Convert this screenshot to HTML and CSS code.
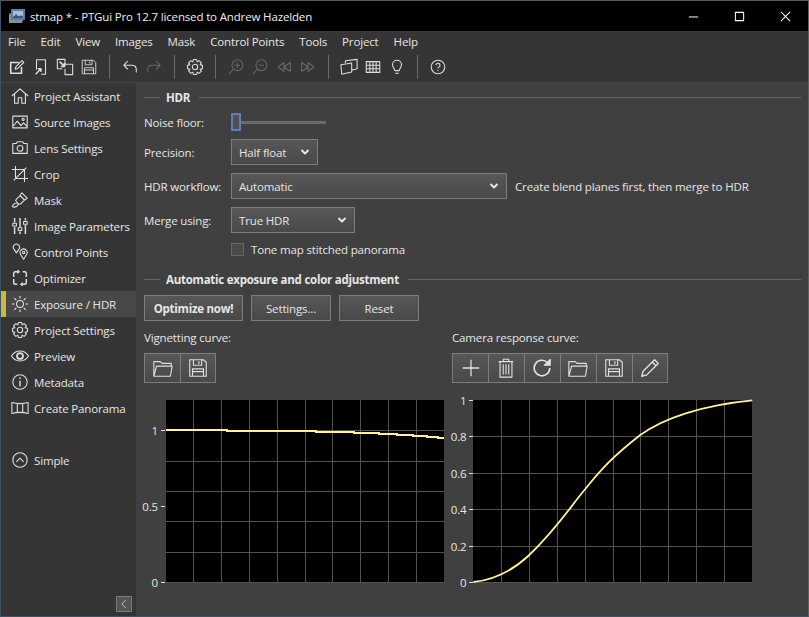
FILE: index.html
```html
<!DOCTYPE html>
<html lang="en">
<head>
  <meta charset="UTF-8" />
  <title>stmap * - PTGui Pro 12.7</title>
  <link rel="stylesheet" href="styles.css">
</head>
<body>
  <!-- Shared icons -->
  <svg class="sprites" width="0" height="0">
    <symbol id="i-folder" viewBox="0 0 24 24"><path d="M2 21V5h7l2 2h10v3M2 21h18l2-11H5z"/></symbol>
    <symbol id="i-save" viewBox="0 0 24 24"><path d="M3 3h15l3 3v15H3zM7 3v6h9V3M13 4.500v3M6 21v-8h12v8M6 16h12"/></symbol>
    <symbol id="i-gear" viewBox="0 0 20 20"><path d="M18.300 8.200L18.300 11.800L15.700 12.400L17.100 14.600L14.600 17.100L12.400 15.700L11.800 18.300L8.200 18.300L7.600 15.700L5.400 17.100L2.900 14.600L4.300 12.400L1.700 11.800L1.700 8.200L4.300 7.600L2.900 5.400L5.400 2.900L7.600 4.300L8.200 1.700L11.800 1.700L12.400 4.300L14.600 2.900L17.100 5.400L15.700 7.600Z"/><circle cx="10" cy="10" r="3"/></symbol>
    <symbol id="i-chevron" viewBox="0 0 10 8"><path d="M1.500 2l3.500 3.500L8.500 2"/></symbol>
  </svg>

  <div class="window">
    <!-- Title bar -->
    <header class="titlebar">
      <svg class="app-icon" viewBox="0 0 16 16"><rect x="2" y="1" width="14" height="11" fill="#5c7ea8"/><rect x="4" y="3" width="10" height="5" fill="#a9bdd6"/><path d="M0 15V6l2-1v7h12l-1 3z" fill="#8d8d8d"/><path d="M4 10l3-4 3 3 2-2 2 3z" fill="#39526f"/></svg>
      <span class="title-text">stmap * - PTGui Pro 12.7 licensed to Andrew Hazelden</span>
      <div class="win-buttons">
        <svg viewBox="0 0 12 12"><path d="M1 6.500h10"/></svg>
        <svg viewBox="0 0 12 12"><rect x="1.500" y="1.500" width="9" height="9"/></svg>
        <svg viewBox="0 0 12 12"><path d="M1 1l10 10M11 1L1 11"/></svg>
      </div>
    </header>

    <!-- Menu -->
    <nav class="menubar">
      <span>File</span><span>Edit</span><span>View</span><span>Images</span><span>Mask</span><span>Control Points</span><span>Tools</span><span>Project</span><span>Help</span>
    </nav>

    <!-- Toolbar -->
    <div class="toolbar">
      <button class="tool"><svg viewBox="0 0 20 20"><path d="M12 5H3v12h12V10" stroke-width="1.800"/><path d="M8 12.500l.8-3L15.500 3l2 2-6.700 6.600z"/></svg></button>
      <button class="tool"><svg viewBox="0 0 20 20"><path d="M5 13V2h10v16h-5"/><path d="M4 18l6-6M6.500 12H10v3.500" stroke-width="1.600"/></svg></button>
      <button class="tool"><svg viewBox="0 0 20 20"><path d="M7 12H1.500V1.500H10V8M7 7h11.500v11.500H10V12"/><path d="M4 4l5.500 5.500M9.500 5.500v4h-4" stroke-width="1.800"/></svg></button>
      <button class="tool"><svg viewBox="0 0 24 24"><use href="#i-save"/></svg></button>
      <i class="sep"></i>
      <button class="tool"><svg viewBox="0 0 20 20"><path d="M3 8l4.500-4.500M3 8l4.500 4.500M3 8h9c3 0 5 2 5 5v3"/></svg></button>
      <button class="tool dim"><svg viewBox="0 0 20 20"><path d="M17 8l-4.500-4.500M17 8l-4.500 4.500M17 8H8c-3 0-5 2-5 5v3"/></svg></button>
      <i class="sep"></i>
      <button class="tool"><svg viewBox="0 0 20 20"><use href="#i-gear"/></svg></button>
      <i class="sep"></i>
      <button class="tool dim"><svg viewBox="0 0 20 20"><circle cx="11.500" cy="8" r="6"/><path d="M7 12.500L2 18M11.500 5v6M8.500 8h6"/></svg></button>
      <button class="tool dim"><svg viewBox="0 0 20 20"><circle cx="11.500" cy="8" r="6"/><path d="M7 12.500L2 18M8.500 8h6"/></svg></button>
      <button class="tool dim"><svg viewBox="0 0 20 20"><path d="M10 5L3.500 10l6.500 5zM17 5l-7 5 7 5z"/></svg></button>
      <button class="tool dim"><svg viewBox="0 0 20 20"><path d="M10 5l6.500 5-6.500 5zM3 5l7 5-7 5z"/></svg></button>
      <i class="sep"></i>
      <button class="tool"><svg viewBox="0 0 20 20"><path d="M1 7.500l12-2v10l-11 2.500zM6 5.500V3l13-1.500V12l-6 1.500"/></svg></button>
      <button class="tool"><svg viewBox="0 0 20 20"><path d="M2.500 4h15v12h-15zM2.500 8h15M2.500 12h15M6.500 4v12M10 4v12M13.500 4v12"/></svg></button>
      <button class="tool"><svg viewBox="0 0 20 20"><path d="M7.500 14c0-2-2.500-3.500-2.500-6.500a5 5 0 0 1 10 0c0 3-2.500 4.500-2.500 6.500zM8 17h4"/></svg></button>
      <i class="sep"></i>
      <button class="tool"><svg viewBox="0 0 20 20"><circle cx="10" cy="10" r="7.500"/><path d="M7.800 8a2.200 2.200 0 1 1 3.400 1.900c-.9.600-1.200 1-1.200 1.900M10 13.200v1.300"/></svg></button>
    </div>

    <div class="main">
      <!-- Side navigation -->
      <aside class="sidebar">
        <a class="nav-item"><svg viewBox="0 0 20 20"><path d="M1 10l9-8 9 8M4 8v10h4v-6h4v6h4V8"/></svg>Project Assistant</a>
        <a class="nav-item"><svg viewBox="0 0 20 20"><path d="M2 3.500h16v13H2zM2 15l5-6 4 5 3-3 4 4"/><circle cx="13.500" cy="7" r="1.200"/></svg>Source Images</a>
        <a class="nav-item"><svg viewBox="0 0 20 20"><path d="M2 5h4l1-2h6l1 2h4v11H2z"/><circle cx="10" cy="10.500" r="3.200"/></svg>Lens Settings</a>
        <a class="nav-item"><svg viewBox="0 0 20 20"><path d="M5 1v14h14M1 5h14v14M3 17L17 3"/></svg>Crop</a>
        <a class="nav-item"><svg viewBox="0 0 20 20"><path d="M12 2l6 6-3 2-5-5zM10 5.500L6 9c-1 1-1 2 0 3l2 2c1 1 2 1 3 0l4-4M7.500 13L4 14c-1 .5-2 2-2.500 3.500C3 18 5 18 6.500 17c1-.8 1.500-2 1.500-3"/></svg>Mask</a>
        <a class="nav-item"><svg viewBox="0 0 20 20"><path d="M4 1v5M4 11v8M10 1v10M10 16v3M16 1v3M16 9v10" stroke-width="1.600"/><path d="M2 7h4v3H2zM8 12h4v3H8zM14 5h4v3h-4z"/></svg>Image Parameters</a>
        <a class="nav-item"><svg viewBox="0 0 20 20"><path d="M6 11L3 6.500a3.500 3.500 0 1 1 6 0zM14 18l-3.500-5.500a4 4 0 1 1 7 0z"/><circle cx="14" cy="10.500" r="1.300"/></svg>Control Points</a>
        <a class="nav-item"><svg viewBox="0 0 20 20"><path d="M3 9V5c0-1 1-2 2-2h2M7 1.500L9 3 7 4.500M13 3h2c1 0 2 1 2 2v4M17 11v4c0 1-1 2-2 2h-2M13 18.500L11 17l2-1.500M7 17H5c-1 0-2-1-2-2v-4" stroke-width="1.600"/></svg>Optimizer</a>
        <a class="nav-item active"><svg viewBox="0 0 20 20"><circle cx="10" cy="10" r="3.800"/><path d="M10 1v3M10 16v3M1 10h3M16 10h3M3.600 3.600l2.200 2.200M14.200 14.200l2.200 2.200M3.600 16.400l2.200-2.200M14.200 5.800l2.200-2.200"/></svg>Exposure / HDR</a>
        <a class="nav-item"><svg viewBox="0 0 20 20"><use href="#i-gear"/></svg>Project Settings</a>
        <a class="nav-item"><svg viewBox="0 0 20 20"><path d="M.5 10C3 6 6 4.500 10 4.500S17 6 19.500 10C17 14 14 15.500 10 15.500S3 14 .5 10z"/><circle cx="10" cy="10" r="3.300" stroke-width="2"/></svg>Preview</a>
        <a class="nav-item"><svg viewBox="0 0 20 20"><circle cx="10" cy="10" r="8"/><path d="M10 8.500V15M10 5v1.800" stroke-width="1.600"/></svg>Metadata</a>
        <a class="nav-item"><svg viewBox="0 0 20 20"><path d="M1 4c6 1.500 12 1.500 18 0v12c-6-1.500-12-1.500-18 0zM7 5v10M13 5v10"/></svg>Create Panorama</a>
        <a class="nav-item simple"><svg viewBox="0 0 20 20"><circle cx="10" cy="10" r="8"/><path d="M6 12l4-4 4 4"/></svg>Simple</a>
        <button class="collapse"><svg viewBox="0 0 16 16"><path d="M10.500 2.500L5 8l5.500 5.500"/></svg></button>
      </aside>

      <!-- HDR panel -->
      <section class="content">
        <div class="group-title first"><span>HDR</span></div>

        <div class="form">
          <label>Noise floor:</label>
          <div class="slider"><i class="handle"></i><i class="track"></i></div>
          <label>Precision:</label>
          <div><div class="combo w-precision">Half float<svg viewBox="0 0 10 8"><use href="#i-chevron"/></svg></div></div>
          <label>HDR workflow:</label>
          <div class="with-note"><div class="combo w-workflow">Automatic<svg viewBox="0 0 10 8"><use href="#i-chevron"/></svg></div><span>Create blend planes first, then merge to HDR</span></div>
          <label>Merge using:</label>
          <div><div class="combo w-merge">True HDR<svg viewBox="0 0 10 8"><use href="#i-chevron"/></svg></div></div>
          <i></i>
          <div class="check"><i class="box"></i>Tone map stitched panorama</div>
        </div>

        <div class="group-title second"><span>Automatic exposure and color adjustment</span></div>

        <div class="actions">
          <button class="btn strong">Optimize now!</button>
          <button class="btn">Settings...</button>
          <button class="btn">Reset</button>
        </div>

        <div class="curves">
          <div class="curve">
            <div class="curve-label">Vignetting curve:</div>
            <div class="tool-group">
              <button><svg viewBox="0 0 24 24"><use href="#i-folder"/></svg></button>
              <button><svg viewBox="0 0 24 24"><use href="#i-save"/></svg></button>
            </div>
            <svg class="plot" width="300" height="183" viewBox="0 0 300 183">
              <rect class="plot-bg" x="22" y="0" width="278" height="182"/>
              <path class="grid" d="M49.500 0v182M77.500 0v182M105.500 0v182M133.500 0v182M161.500 0v182M188.500 0v182M216.500 0v182M244.500 0v182M272.500 0v182M22 30.500h278M22 61.500h278M22 91.500h278M22 121.500h278M22 152.500h278M22 182.500h278"/>
              <path class="ticks" d="M17 30.500h4M17 106.500h4M17 182.500h4"/>
              <text x="14" y="34.500">1</text>
              <text x="14" y="110.500">0.5</text>
              <text x="14" y="186.500">0</text>
              <path class="line steps" d="M22 30H83V31H172V32H210V33H235V34H253V35H269V36H283V37H294V38H300"/>
            </svg>
          </div>

          <div class="curve">
            <div class="curve-label">Camera response curve:</div>
            <div class="tool-group">
              <button><svg viewBox="0 0 24 24"><path d="M12 3v18M3 12h18" stroke-width="1.400"/></svg></button>
              <button><svg viewBox="0 0 24 24"><path d="M4 5h16M9 5V2.500h6V5M5.500 5v17h13V5M9 8v11M12 8v11M15 8v11"/></svg></button>
              <button><svg viewBox="0 0 24 24"><path d="M20.500 12a8.500 8.500 0 1 1-2.500-6l2.500 2.500" stroke-width="1.800"/><path d="M21 2.500v6.500h-6.500z" fill="#ddd"/></svg></button>
              <button><svg viewBox="0 0 24 24"><use href="#i-folder"/></svg></button>
              <button><svg viewBox="0 0 24 24"><use href="#i-save"/></svg></button>
              <button><svg viewBox="0 0 24 24"><path d="M3 21l1.500-5.500L17 3l4 4L8.500 19.500zM14.500 5.500l4 4" stroke-width="1.500"/></svg></button>
            </div>
            <svg class="plot" width="300" height="183" viewBox="0 0 300 183">
              <rect class="plot-bg" x="21" y="0" width="279" height="182"/>
              <path class="grid" d="M49.500 0v182M77.500 0v182M105.500 0v182M133.500 0v182M161.500 0v182M188.500 0v182M216.500 0v182M244.500 0v182M272.500 0v182M21 36.500h279M21 73.500h279M21 109.500h279M21 146.500h279M21 182.500h279"/>
              <path class="ticks" d="M17 .5h4M17 36.500h4M17 73.500h4M17 109.500h4M17 146.500h4M17 182.500h4"/>
              <text x="14.500" y="4.500">1</text>
              <text x="14.500" y="40.500">0.8</text>
              <text x="14.500" y="77.500">0.6</text>
              <text x="14.500" y="113.500">0.4</text>
              <text x="14.500" y="150.500">0.2</text>
              <text x="14.500" y="186.500">0</text>
              <path class="line" transform="translate(21.300 0)" d="M0 182C20 180 40 170 56 155C84 128 96 108 112 89C128 69 140 56 167 35C190 18 230 5 279 .3"/>
            </svg>
          </div>
        </div>
      </section>
    </div>
  </div>
</body>
</html>
```

FILE: styles.css
```css
* {
  box-sizing: border-box;
}
html, body {
  margin: 0;
  height: 100%;
}
body {
  background: #404040;
  color: #e6e6e6;
  font-family: 'Open Sans', sans-serif;
  font-size: 11.5px;
  letter-spacing: -0.15px;
  overflow: hidden;
}
.sprites {
  position: absolute;
}
svg {
  fill: none;
  stroke: currentColor;
  stroke-width: 1.2;
  stroke-linejoin: round;
}
button {
  font: inherit;
  color: inherit;
  letter-spacing: inherit;
}
.window {
  display: flex;
  flex-direction: column;
  width: 809px;
  height: 617px;
  border-style: solid;
  border-width: 1px 1px 1px 1px;
  border-color: #5a5a5a #5f6164 #3d5268 #3d5268;
}

/* Title bar */
.titlebar {
  display: flex;
  align-items: center;
  flex: 0 0 30px;
  background: #000;
  color: #eee;
  padding-left: 8px;
}
.app-icon {
  width: 16px;
  height: 16px;
  margin-right: 5px;
  stroke: none;
}
.title-text {
  flex: 1;
}
.win-buttons {
  display: flex;
  align-items: center;
  margin-right: 17px;
  gap: 35px;
}
.win-buttons svg {
  width: 11px;
  height: 11px;
  color: #fff;
  stroke-width: 1.100;
}

/* Menu */
.menubar {
  display: flex;
  align-items: center;
  flex: 0 0 21px;
  background: #353535;
  padding-left: 7px;
  gap: 15px;
}

/* Toolbar */
.toolbar {
  display: flex;
  align-items: center;
  flex: 0 0 31px;
  background: #353535;
  border-bottom: 1px solid #444;
  padding-left: 4px;
}
.tool {
  width: 24px;
  height: 24px;
  padding: 3px;
  background: none;
  border: 0;
  color: #dcdcdc;
}
.tool svg {
  display: block;
  width: 18px;
  height: 18px;
}
.tool.dim {
  color: #666;
}
.sep {
  width: 1px;
  height: 24px;
  margin: 0 8px;
  background: #6a6a6a;
}

/* Sidebar */
.main {
  display: flex;
  flex: 1;
  min-height: 0;
}
.sidebar {
  position: relative;
  display: flex;
  flex-direction: column;
  flex: 0 0 135px;
  background: #353535;
}
.nav-item {
  display: flex;
  align-items: center;
  flex: 0 0 26px;
  padding-left: 10px;
  gap: 5px;
  color: #e6e6e6;
}
.nav-item svg {
  width: 18px;
  height: 18px;
  color: #e0e0e0;
}
.nav-item.active {
  background: #484848;
  border-left: 5px solid #c9b93a;
  padding-left: 5px;
}
.nav-item.simple {
  margin-top: 26px;
}
.collapse {
  position: absolute;
  right: 4px;
  bottom: 4px;
  width: 16px;
  height: 16px;
  padding: 1px;
  background: #555;
  border: 1px solid #7a7a7a;
  color: #ccc;
}
.collapse svg {
  display: block;
}

/* Panel */
.content {
  flex: 1;
  display: flex;
  flex-direction: column;
  padding: 6px 7px 0 8px;
  background: #404040;
}
.group-title {
  display: flex;
  align-items: center;
  height: 16px;
  gap: 6px;
  font-weight: 700;
  letter-spacing: -0.25px;
}
.group-title.second {
  margin-top: 15px;
}
.group-title::before {
  content: "";
  width: 16px;
  height: 1px;
  background: #666;
}
.group-title::after {
  content: "";
  flex: 1;
  height: 1px;
  margin-left: 3px;
  background: #666;
}
.form {
  display: grid;
  grid-template-columns: 87px 1fr;
  align-items: center;
  row-gap: 8px;
  margin-top: 8px;
}
.slider {
  display: flex;
  align-items: center;
  height: 18px;
}
.handle {
  width: 10px;
  height: 18px;
  background: #505050;
  border: 2px solid #5f7bbd;
}
.track {
  width: 85px;
  height: 3px;
  background: #6a6a6a;
}
.combo {
  display: flex;
  align-items: center;
  justify-content: space-between;
  height: 26px;
  padding: 0 7px 0 7px;
  background: linear-gradient(#575757, #494949);
  border: 1px solid #7d7d7d;
}
.combo svg {
  width: 10px;
  height: 8px;
  stroke-width: 2;
}
.w-precision {
  width: 87px;
}
.w-workflow {
  width: 276px;
}
.w-merge {
  width: 124px;
}
.with-note {
  display: flex;
  align-items: center;
  gap: 8px;
}
.check {
  display: flex;
  align-items: center;
  gap: 7px;
  height: 13px;
  margin-top: 2px;
}
.box {
  width: 13px;
  height: 13px;
  background: #4a4a4a;
  border: 1px solid #666;
}
.actions {
  display: flex;
  gap: 8px;
  margin-top: 8px;
}
.btn {
  width: 80px;
  height: 26px;
  padding: 0;
  background: linear-gradient(#575757, #494949);
  border: 1px solid #7d7d7d;
}
.btn.strong {
  width: 99px;
  font-weight: 700;
  letter-spacing: -0.25px;
}

/* Curves */
.curves {
  display: flex;
  gap: 8px;
  margin-top: 10px;
}
.curve {
  width: 300px;
}
.curve-label {
  height: 14px;
  line-height: 14px;
}
.tool-group {
  display: flex;
  width: fit-content;
  margin: 8px 0 17px;
  border: 1px solid #7d7d7d;
}
.tool-group button {
  width: 36px;
  height: 28px;
  padding: 2px 6px;
  background: linear-gradient(#575757, #494949);
  border: 0;
  border-left: 1px solid #7d7d7d;
  color: #e0e0e0;
}
.tool-group button:first-child {
  width: 35px;
  padding-left: 7px;
  border-left: 0;
}
.tool-group button:last-child {
  width: 35px;
}
.tool-group svg {
  display: block;
  width: 22px;
  height: 22px;
}
.plot {
  display: block;
  overflow: visible;
  stroke-width: 1;
}
.plot text {
  fill: #e6e6e6;
  stroke: none;
  font-size: 11.5px;
  text-anchor: end;
}
.plot-bg {
  fill: #000;
  stroke: none;
}
.grid {
  stroke: #525252;
  shape-rendering: crispEdges;
}
.ticks {
  stroke: #ddd;
  shape-rendering: crispEdges;
}
.line {
  stroke: #fff29a;
  stroke-width: 1.800;
}
.steps {
  stroke-width: 2;
  shape-rendering: crispEdges;
}
```
